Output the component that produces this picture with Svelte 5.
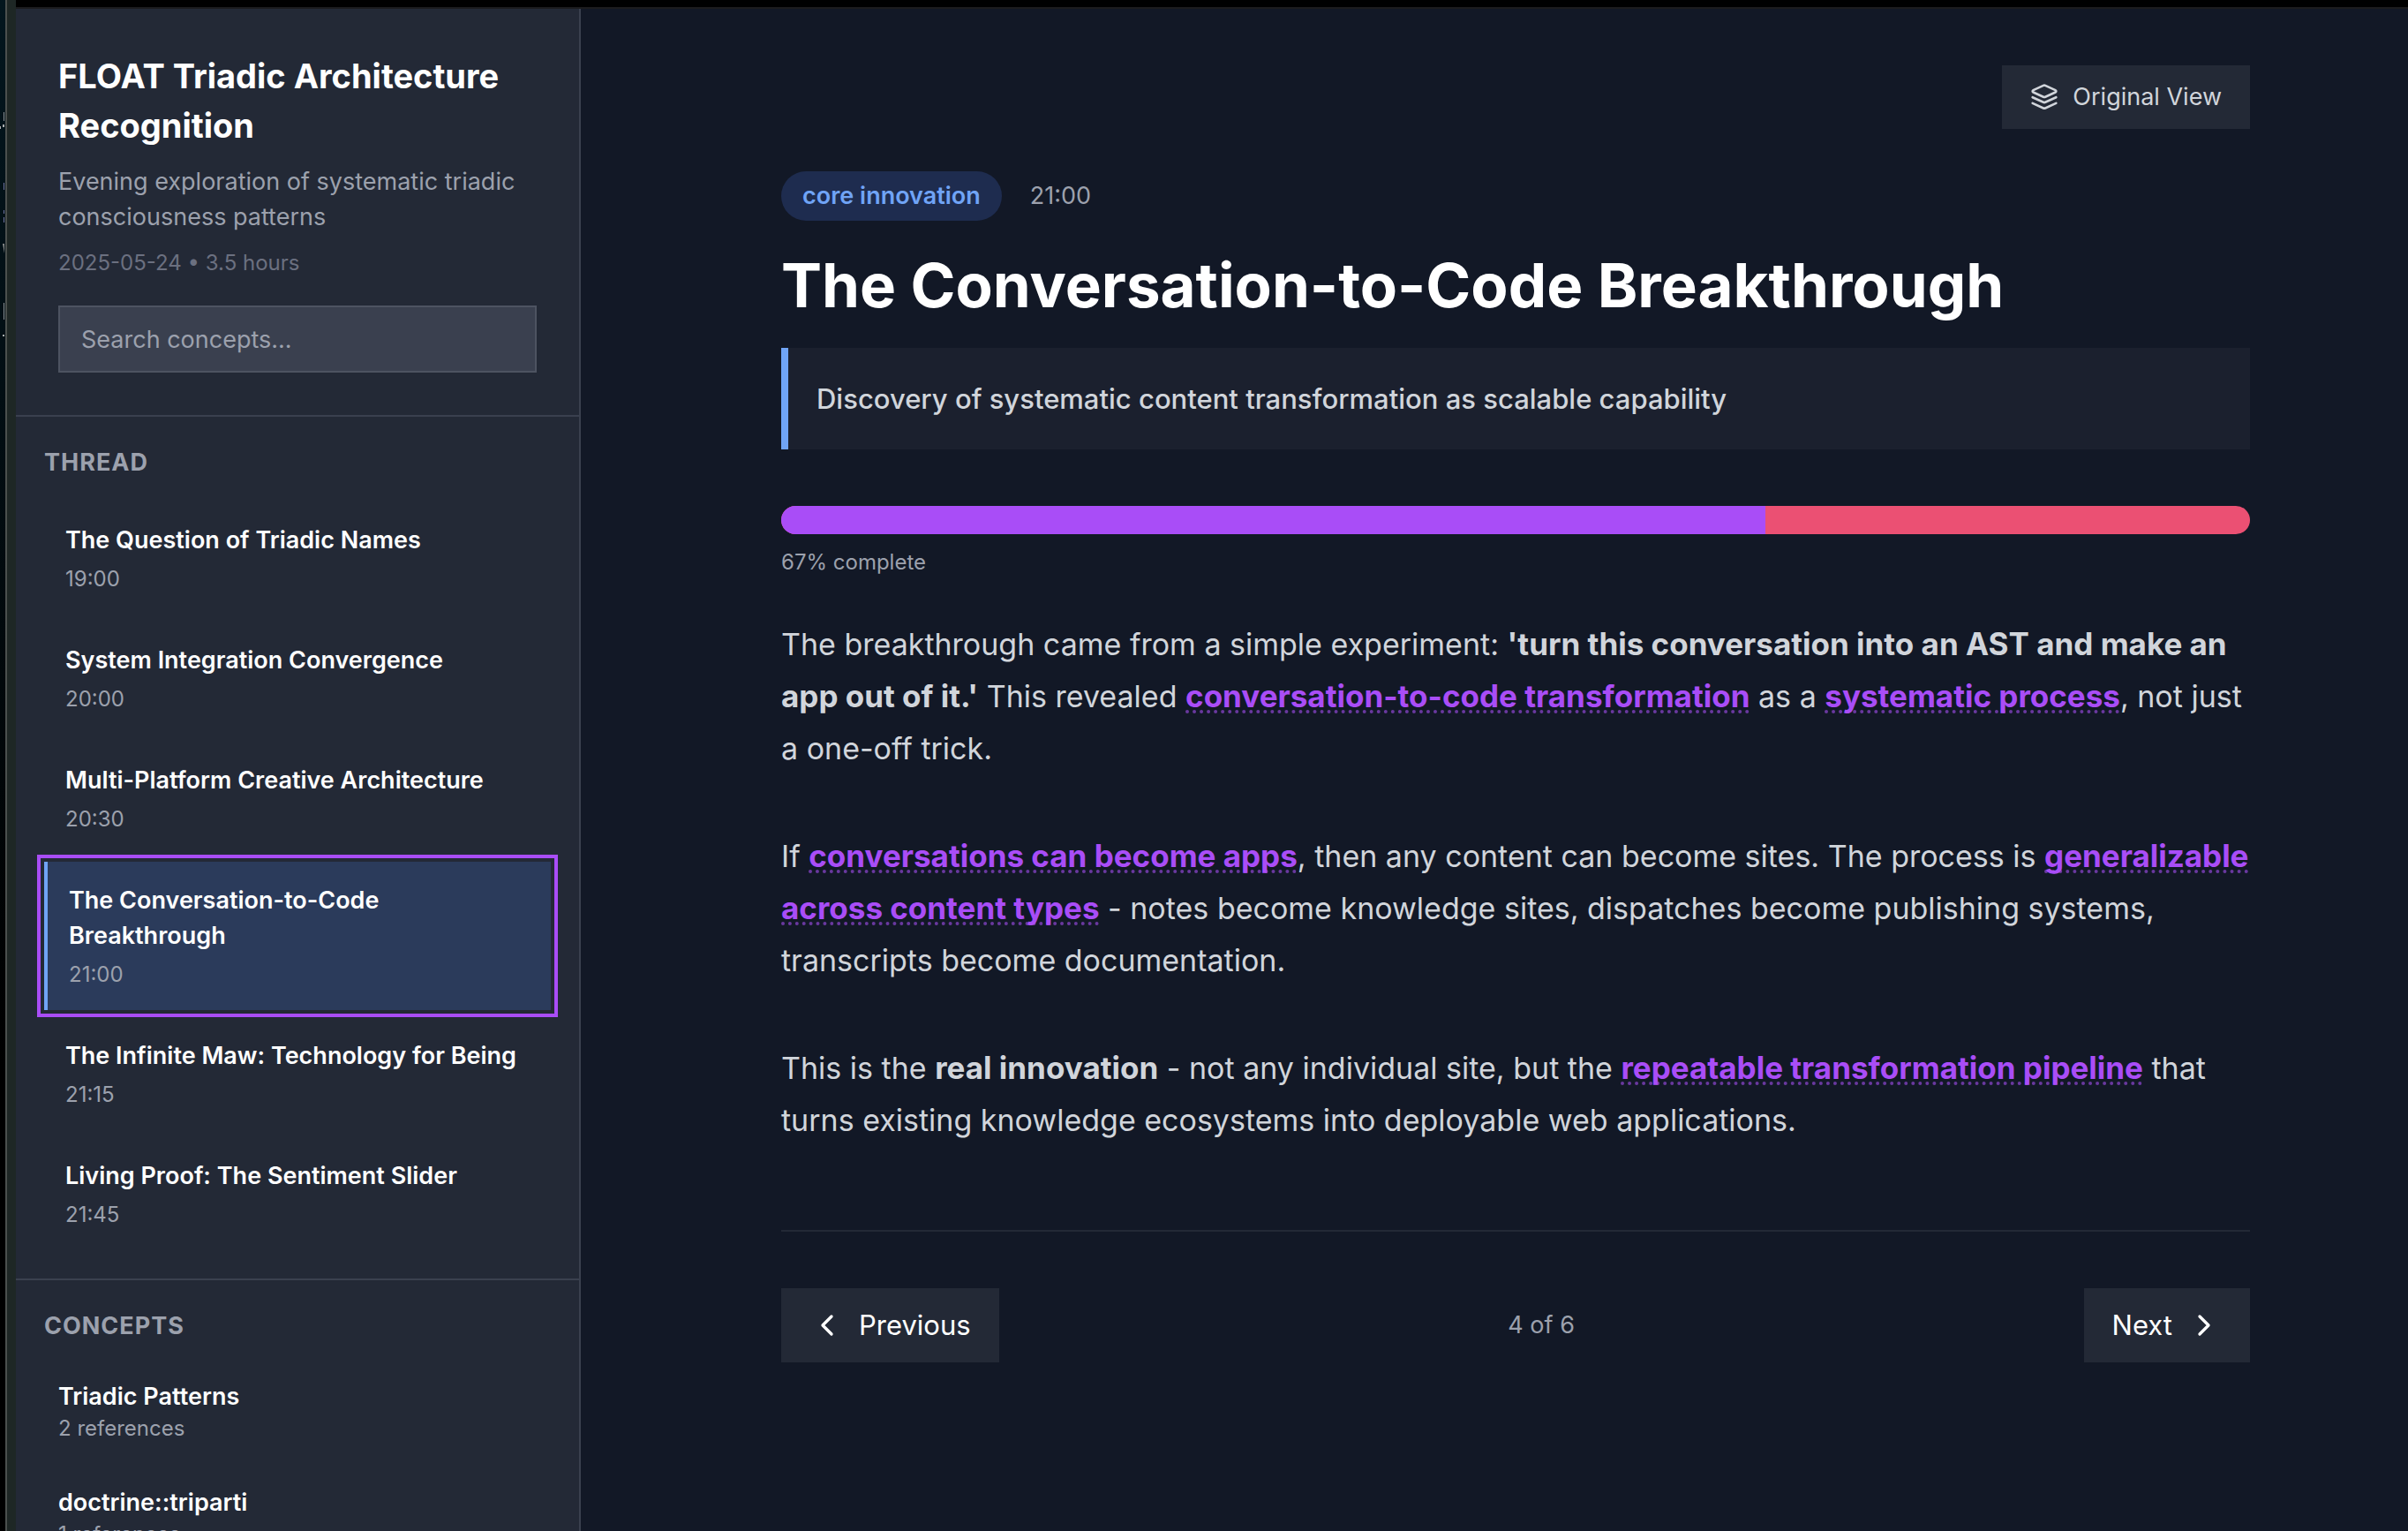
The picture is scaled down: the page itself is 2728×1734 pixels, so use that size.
<script lang="ts">
  type Item = { title: string; time: string };
  const thread: Item[] = [
    { title: 'The Question of Triadic Names', time: '19:00' },
    { title: 'System Integration Convergence', time: '20:00' },
    { title: 'Multi-Platform Creative Architecture', time: '20:30' },
    { title: 'The Conversation-to-Code Breakthrough', time: '21:00' },
    { title: 'The Infinite Maw: Technology for Being', time: '21:15' },
    { title: 'Living Proof: The Sentiment Slider', time: '21:45' },
  ];
  const concepts = [
    { name: 'Triadic Patterns', refs: '2 references' },
    { name: 'doctrine::triparti', refs: '1 references' },
  ];
  let current = $state(3);
  let query = $state('');
  const progress = $derived(Math.round(((current + 1) / thread.length) * 100));
</script>

<div class="screen">
  <div class="edge">
    <svg class="behind" width="6" height="400" aria-hidden="true">
      <path d="M4.5 127v10M4.5 343v19" stroke="#8b9194" />
      <path d="M3 141h2v3h-2zM0 143h1v3h-1zM3 379h2v2h-2z" fill="#a9adae" stroke="none" />
      <path d="M4.5 207v8M4.5 238v4M4.5 246v6" stroke="#6f74a0" />
      <path d="M3 276l2 11v-11z" fill="#8b8d8c" stroke="none" />
    </svg>
  </div>
  <div class="window">
    <aside>
      <header>
        <h1>FLOAT Triadic Architecture Recognition</h1>
        <p class="subtitle">Evening exploration of systematic triadic consciousness patterns</p>
        <p class="meta">2025-05-24 • 3.5 hours</p>
        <input type="text" aria-label="Search concepts" placeholder="Search concepts..." bind:value={query} />
      </header>
      <section>
        <h2>Thread</h2>
        <nav class="thread" aria-label="Thread">
          {#each thread as item, i}
            <button class="item" class:active={i === current} onclick={() => (current = i)}>
              <span class="name">{item.title}</span>
              <span class="small">{item.time}</span>
            </button>
          {/each}
        </nav>
      </section>
      <section>
        <h2>Concepts</h2>
        <div class="concepts">
          {#each concepts as concept}
            <button class="concept">
              <span class="name">{concept.name}</span>
              <span class="small">{concept.refs}</span>
            </button>
          {/each}
        </div>
      </section>
    </aside>

    <main>
      <div class="content">
        <div class="toolbar">
          <button class="view">
            <svg class="layers" viewBox="0 0 24 24" aria-hidden="true">
              <path d="m12.83 2.18a2 2 0 0 0-1.66 0L2.6 6.08a1 1 0 0 0 0 1.83l8.58 3.91a2 2 0 0 0 1.66 0l8.58-3.9a1 1 0 0 0 0-1.83Z" />
              <path d="m22 12.18-9.17 4.16a2 2 0 0 1-1.66 0L2 12.18" />
              <path d="m22 17.18-9.17 4.16a2 2 0 0 1-1.66 0L2 17.18" />
            </svg>
            Original View
          </button>
        </div>

        <article>
          <div class="tags">
            <span class="badge">core innovation</span>
            <span class="time">21:00</span>
          </div>
          <h2 class="title">The Conversation-to-Code Breakthrough</h2>
          <blockquote>Discovery of systematic content transformation as scalable capability</blockquote>

          <div class="track" role="progressbar" aria-label="Progress" aria-valuenow={progress}>
            <div class="fill" style:width="{progress}%"></div>
          </div>
          <p class="complete">{progress}% complete</p>

          <div class="prose">
            <p>
              The breakthrough came from a simple experiment: <strong>'turn this conversation into an AST and make an app out of it.'</strong> This revealed <a href="#conversation-to-code">conversation-to-code transformation</a> as a <a href="#systematic-process">systematic process</a>, not just a one-off trick.
            </p>
            <p>
              If <a href="#apps">conversations can become apps</a>, then any content can become sites. The process is <a href="#generalizable">generalizable across content types</a> - notes become knowledge sites, dispatches become publishing systems, transcripts become documentation.
            </p>
            <p>
              This is the <strong>real innovation</strong> - not any individual site, but the <a href="#pipeline">repeatable transformation pipeline</a> that turns existing knowledge ecosystems into deployable web applications.
            </p>
          </div>
        </article>

        <footer>
          <button class="step" onclick={() => (current = Math.max(0, current - 1))}>
            <svg class="chevron" viewBox="0 0 24 24" aria-hidden="true"><path d="m15 18-6-6 6-6" /></svg>
            Previous
          </button>
          <span class="count">{current + 1} of {thread.length}</span>
          <button class="step" onclick={() => (current = Math.min(thread.length - 1, current + 1))}>
            Next
            <svg class="chevron" viewBox="0 0 24 24" aria-hidden="true"><path d="m9 18 6-6-6-6" /></svg>
          </button>
        </footer>
      </div>
    </main>
  </div>
</div>

<style>
  :global(body) {
    margin: 0;
    background: #121826;
  }
  * {
    box-sizing: border-box;
  }
  h1, h2, p, blockquote {
    margin: 0;
  }
  button, input {
    font: inherit;
    color: inherit;
    border: 0;
    border-radius: 0;
    cursor: pointer;
  }
  svg {
    flex: none;
    fill: none;
    stroke: currentColor;
    stroke-width: 2;
    stroke-linecap: round;
    stroke-linejoin: round;
  }
  .screen {
    display: flex;
    height: 100vh;
    overflow: hidden;
    font-family: Inter, 'Liberation Sans', sans-serif;
    font-size: 27px;
    line-height: 40px;
    color: #fff;
  }
  .edge {
    flex: none;
    width: 18px;
    background:
      linear-gradient(90deg, transparent 6px, #4b504e 6px 8px, #1e2725 8px),
      linear-gradient(#03161e, #000 70%);
  }
  .behind {
    display: block;
    stroke-width: 1;
    stroke-linecap: butt;
  }
  .window {
    flex: 1;
    min-width: 0;
    display: flex;
    border-top: 8px solid #000;
    box-shadow: inset 0 2px #1c1c1e;
    padding-top: 2px;
    background: #121826;
  }
  aside {
    flex: none;
    width: 640px;
    overflow: hidden;
    background: #232936;
    border-right: 2px solid #3a404e;
  }
  header {
    padding: 48px;
  }
  h1 {
    font-size: 38px;
    line-height: 56px;
    font-weight: 700;
    margin-bottom: 16px;
  }
  .subtitle {
    color: #9ca1ad;
    margin-bottom: 16px;
  }
  .meta {
    font-size: 24px;
    line-height: 32px;
    color: #6b7080;
    margin-bottom: 32px;
  }
  input {
    display: block;
    width: 100%;
    height: 76px;
    padding: 0 24px;
    background: #3a404f;
    border: 2px solid #4d5361;
  }
  input::placeholder {
    color: #9ca1ad;
    opacity: 1;
  }
  section {
    border-top: 2px solid #3a404e;
    padding: 32px;
  }
  section h2 {
    font-size: 27px;
    line-height: 40px;
    font-weight: 700;
    letter-spacing: 1px;
    text-transform: uppercase;
    color: #9ca1ad;
    margin-bottom: 24px;
  }
  .thread, .concepts {
    display: flex;
    flex-direction: column;
    gap: 8px;
  }
  .concepts {
    gap: 16px;
  }
  .item, .concept {
    display: flex;
    flex-direction: column;
    gap: 8px;
    padding: 24px;
    text-align: left;
    background: none;
  }
  .concept {
    gap: 0;
    padding: 16px;
  }
  .item.active {
    background: #2b3b5b;
    border-left: 4px solid #70a4f6;
    outline: 4px solid #a94df7;
    outline-offset: 4px;
  }
  .name {
    font-weight: 600;
  }
  .small {
    font-size: 24px;
    line-height: 32px;
    color: #9ca1ad;
  }
  main {
    flex: 1;
    min-width: 0;
    padding: 64px 0 64px 48px;
  }
  .content {
    max-width: 1664px;
    margin: 0 auto;
  }
  .toolbar {
    display: flex;
    justify-content: flex-end;
    margin-bottom: 48px;
  }
  .view {
    display: flex;
    align-items: center;
    gap: 16px;
    padding: 16px 32px;
    background: #232936;
    color: #d1d5db;
  }
  .layers {
    width: 32px;
    height: 32px;
  }
  .tags {
    display: flex;
    align-items: center;
    gap: 32px;
    margin-bottom: 28px;
  }
  .badge {
    padding: 8px 24px;
    border-radius: 28px;
    background: #1e2c4f;
    color: #70a4f6;
    font-weight: 600;
  }
  .time, .count {
    color: #9ca1ad;
  }
  .title {
    font-size: 69px;
    line-height: 90px;
    font-weight: 700;
    margin-bottom: 26px;
  }
  blockquote {
    padding: 32px;
    border-left: 8px solid #70a4f6;
    background: #1b202e;
    color: #d1d5db;
    font-size: 31px;
    line-height: 51px;
    font-weight: 500;
    margin-bottom: 64px;
  }
  .track {
    height: 32px;
    border-radius: 16px;
    overflow: hidden;
    background: #eb5073;
  }
  .fill {
    height: 100%;
    background: #a94df7;
  }
  .complete {
    margin: 16px 0 47px;
    font-size: 24px;
    line-height: 32px;
    color: #9ca1ad;
  }
  .prose {
    display: flex;
    flex-direction: column;
    gap: 63px;
    color: #d1d5db;
    font-size: 34px;
    line-height: 59px;
    margin-bottom: 95px;
  }
  .prose strong, .prose a {
    font-size: 35px;
    font-weight: 700;
  }
  .prose a {
    color: #a94df7;
    text-decoration: underline dotted 4px #69389f;
    text-underline-offset: 3px;
    text-decoration-skip-ink: none;
  }
  footer {
    display: flex;
    align-items: center;
    justify-content: space-between;
    padding-top: 64px;
    border-top: 2px solid #232936;
  }
  .step {
    display: flex;
    align-items: center;
    gap: 16px;
    padding: 18px 32px;
    background: #232936;
    font-size: 31px;
    line-height: 48px;
  }
  .chevron {
    width: 40px;
    height: 40px;
  }
</style>
